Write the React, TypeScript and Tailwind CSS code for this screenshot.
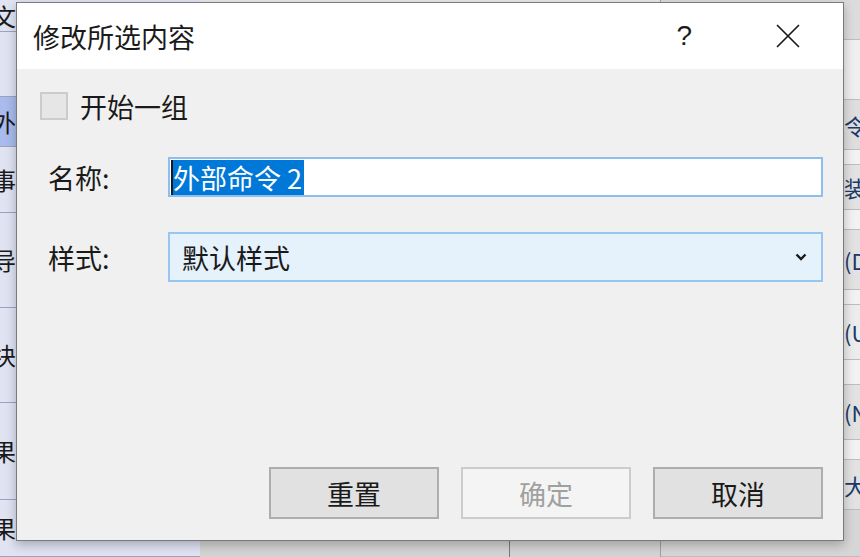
const font = { fontFamily: '"Noto Sans CJK SC", "Noto Sans", sans-serif' };

const leftRows = [
  { h: 32, text: '文', sel: false },
  { h: 65, text: '', sel: false },
  { h: 50, text: '外部', sel: true },
  { h: 66, text: '事件', sel: false },
  { h: 95, text: '导入', sel: false },
  { h: 95, text: '块贴', sel: false },
  { h: 97, text: '果相', sel: false },
  { h: 57, text: '果的图表...', sel: false },
];

const rightRows = [
  { h: 40, text: '', bg: 'bg-[#dcdcdc]' },
  { h: 60, text: '', bg: 'bg-[#efefef]' },
  { h: 50, text: '令', bg: 'bg-[#dedede]' },
  { h: 15, text: '', bg: 'bg-[#f2f2f2]' },
  { h: 45, text: '装', bg: 'bg-[#e2e2e2]' },
  { h: 20, text: '', bg: 'bg-[#f2f2f2]' },
  { h: 60, text: '(D', bg: 'bg-[#e2e2e2]' },
  { h: 15, text: '', bg: 'bg-[#f2f2f2]' },
  { h: 55, text: '(U', bg: 'bg-[#ececec]' },
  { h: 25, text: '', bg: 'bg-[#f2f2f2]' },
  { h: 55, text: '(N', bg: 'bg-[#e2e2e2]' },
  { h: 20, text: '', bg: 'bg-[#f2f2f2]' },
  { h: 50, text: '大', bg: 'bg-[#e2e2e2]' },
  { h: 47, text: '', bg: 'bg-[#d6d6d6]' },
];

function Chevron() {
  return (
    <svg width="12" height="8" viewBox="0 0 12 8" className="text-[#1a1a1a]">
      <path d="M1.5 1.5 L6 6 L10.5 1.5" fill="none" stroke="currentColor" strokeWidth="2.4" />
    </svg>
  );
}

function CloseIcon() {
  return (
    <svg width="24" height="24" viewBox="0 0 24 24" className="text-[#1a1a1a]">
      <path d="M1 1 L23 23 M23 1 L1 23" fill="none" stroke="currentColor" strokeWidth="1.7" />
    </svg>
  );
}

function Dialog() {
  return (
    <div
      className="absolute left-[16px] top-[2px] flex h-[539px] w-[828px] flex-col border border-[#7a7a7a] bg-[#f0f0f0] shadow-[0_4px_10px_rgba(0,0,0,0.25)]"
      style={font}
    >
      <div className="flex h-[66px] shrink-0 items-center bg-white">
        <span className="pl-[16px] text-[27px] leading-none text-[#1a1a1a]">修改所选内容</span>
        <span className="ml-auto mr-[84px] text-[28px] leading-none text-[#1a1a1a]" style={{ fontFamily: '"Liberation Sans", sans-serif' }}>?</span>
        <span className="mr-[43px]"><CloseIcon /></span>
      </div>

      <div className="flex flex-1 flex-col pl-[23px] pr-[20px] pb-[21px] pt-[23px] text-[27px] text-[#1a1a1a]">
        <div className="flex h-[28px] items-center gap-[12px]">
          <div className="h-[28px] w-[28px] border-2 border-[#cccccc] bg-[#e6e6e6]" />
          <span className="leading-none">开始一组</span>
        </div>

        <div className="mt-[37px] flex items-center">
          <span className="w-[128px] pl-[8px] leading-none">名称:</span>
          <div className="flex h-[40px] flex-1 items-center border-2 border-[#8dbef0] bg-white pl-[1px]">
            <span className="flex h-[35px] items-center border-l-2 border-[#1a1a1a] bg-[#0078d7] pr-[2px] leading-none text-white">
              外部命令 2
            </span>
          </div>
        </div>

        <div className="mt-[35px] flex items-center">
          <span className="w-[128px] pl-[8px] leading-none">样式:</span>
          <div className="flex h-[50px] flex-1 items-center border-2 border-[#97c6f2] bg-[#e5f1fb] pl-[12px] pr-[14px]">
            <span className="leading-none">默认样式</span>
            <span className="ml-auto"><Chevron /></span>
          </div>
        </div>

        <div className="mt-auto flex justify-end gap-[22px]">
          <button className="h-[52px] w-[170px] border-2 border-[#adadad] bg-[#e1e1e1] text-[27px] leading-none text-[#1a1a1a]">
            重置
          </button>
          <button className="h-[52px] w-[170px] border-2 border-[#cccccc] bg-[#f4f4f4] text-[27px] leading-none text-[#a0a0a0]">
            确定
          </button>
          <button className="h-[52px] w-[170px] border-2 border-[#adadad] bg-[#e1e1e1] text-[27px] leading-none text-[#1a1a1a]">
            取消
          </button>
        </div>
      </div>
    </div>
  );
}

export default function App() {
  return (
    <div className="relative h-[557px] w-[860px] overflow-hidden bg-[#e8e8e8]" style={font}>
      <div className="flex h-full">
        <div className="flex w-[200px] flex-col bg-[#dfe3f2] text-[24px] text-[#1a1a1a]">
          {leftRows.map((r, i) => (
            <div
              key={i}
              className={`flex items-center overflow-hidden whitespace-nowrap border-b border-[#9aa3bd] ${r.sel ? 'bg-[#a9bbec]' : ''}`}
              style={{ height: r.h }}
            >
              <span className="-ml-[8px] leading-none">{r.text}</span>
            </div>
          ))}
        </div>
        <div className="flex flex-1 flex-col justify-end">
          <div className="flex h-[16px] bg-[#d4d4d4]">
            <div className="ml-auto mr-[150px] w-[1px] bg-[#7a7a7a]" />
          </div>
        </div>
        <div className="flex w-[200px] flex-col border-l border-[#a0a0a0] text-[22px] text-[#1a3a6a]">
          {rightRows.map((r, i) => (
            <div
              key={i}
              className={`flex items-center justify-end overflow-hidden whitespace-nowrap border-b border-[#bdbdbd] ${r.bg}`}
              style={{ height: r.h }}
            >
              <span className="w-[16px] leading-none">{r.text}</span>
            </div>
          ))}
        </div>
      </div>
      <Dialog />
    </div>
  );
}
